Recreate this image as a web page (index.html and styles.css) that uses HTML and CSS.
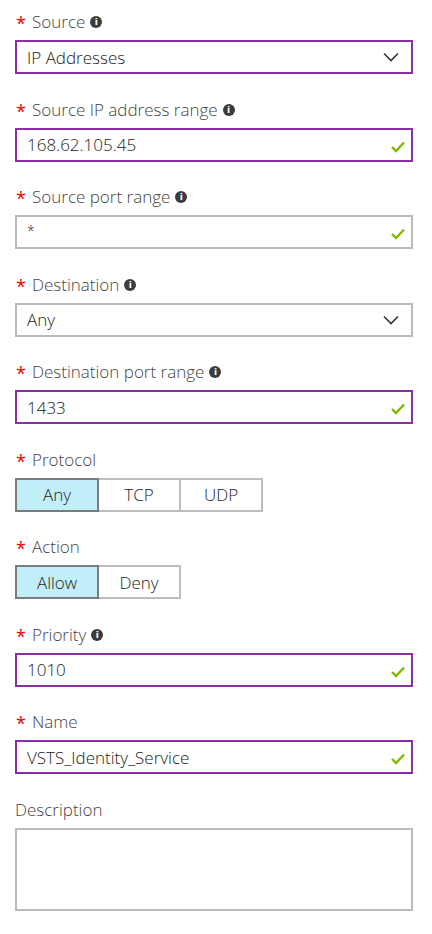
FILE: index.html
```html
<!DOCTYPE html>
<html>
<head>
<meta charset="utf-8">
<link rel="stylesheet" href="styles.css">
</head>
<body>
<form class="form">
  <div class="field">
    <div class="label"><span class="req">*</span><span class="text">Source</span><span class="info">i</span></div>
    <div class="control focus select"><span class="value">IP Addresses</span>
      <svg class="chev" width="16" height="10" viewBox="0 0 16 10"><path d="M1 1.5 L8 8.5 L15 1.5" fill="none" stroke="#333" stroke-width="1.6"/></svg>
    </div>
  </div>
  <div class="field">
    <div class="label"><span class="req">*</span><span class="text">Source IP address range</span><span class="info">i</span></div>
    <div class="control focus"><span class="value">168.62.105.45</span>
      <svg class="check" width="14" height="12" viewBox="0 0 14 12"><path d="M1 6 L5 10 L13 1.5" fill="none" stroke="#7fba00" stroke-width="2.4"/></svg>
    </div>
  </div>
  <div class="field">
    <div class="label"><span class="req">*</span><span class="text">Source port range</span><span class="info">i</span></div>
    <div class="control"><span class="value small">*</span>
      <svg class="check" width="14" height="12" viewBox="0 0 14 12"><path d="M1 6 L5 10 L13 1.5" fill="none" stroke="#7fba00" stroke-width="2.4"/></svg>
    </div>
  </div>
  <div class="field">
    <div class="label"><span class="req">*</span><span class="text">Destination</span><span class="info">i</span></div>
    <div class="control select"><span class="value">Any</span>
      <svg class="chev" width="16" height="10" viewBox="0 0 16 10"><path d="M1 1.5 L8 8.5 L15 1.5" fill="none" stroke="#333" stroke-width="1.6"/></svg>
    </div>
  </div>
  <div class="field">
    <div class="label"><span class="req">*</span><span class="text">Destination port range</span><span class="info">i</span></div>
    <div class="control focus"><span class="value">1433</span>
      <svg class="check" width="14" height="12" viewBox="0 0 14 12"><path d="M1 6 L5 10 L13 1.5" fill="none" stroke="#7fba00" stroke-width="2.4"/></svg>
    </div>
  </div>
  <div class="field">
    <div class="label"><span class="req">*</span><span class="text">Protocol</span></div>
    <div class="seg">
      <span class="opt on">Any</span><span class="opt">TCP</span><span class="opt">UDP</span>
    </div>
  </div>
  <div class="field">
    <div class="label"><span class="req">*</span><span class="text">Action</span></div>
    <div class="seg">
      <span class="opt on">Allow</span><span class="opt">Deny</span>
    </div>
  </div>
  <div class="field">
    <div class="label"><span class="req">*</span><span class="text">Priority</span><span class="info">i</span></div>
    <div class="control focus"><span class="value">1010</span>
      <svg class="check" width="14" height="12" viewBox="0 0 14 12"><path d="M1 6 L5 10 L13 1.5" fill="none" stroke="#7fba00" stroke-width="2.4"/></svg>
    </div>
  </div>
  <div class="field">
    <div class="label"><span class="req">*</span><span class="text">Name</span></div>
    <div class="control focus"><span class="value">VSTS_Identity_Service</span>
      <svg class="check" width="14" height="12" viewBox="0 0 14 12"><path d="M1 6 L5 10 L13 1.5" fill="none" stroke="#7fba00" stroke-width="2.4"/></svg>
    </div>
  </div>
  <div class="field">
    <div class="label plain"><span class="text">Description</span></div>
    <div class="area"></div>
  </div>
</form>
</body>
</html>
```
FILE: styles.css
```css
html, body {
  margin: 0;
  padding: 0;
  background: #fff;
}
body {
  font-family: "Open Sans", "Noto Sans", sans-serif;
  color: #333;
}
.form {
  padding: 12px 19px 0 15px;
  display: flex;
  flex-direction: column;
  gap: 25.5px;
}
.field {
  display: flex;
  flex-direction: column;
  gap: 8px;
}
.label {
  height: 20px;
  display: flex;
  align-items: center;
  font-size: 17px;
  font-weight: 300;
  color: #444;
}
.req {
  color: #e00000;
  width: 17px;
  padding-left: 1px;
  box-sizing: border-box;
  font-size: 18px;
  font-weight: 400;
  line-height: 20px;
  height: 20px;
  position: relative;
  top: 1px;
}
.text {
  line-height: 20px;
}
.info {
  display: inline-flex;
  align-items: center;
  justify-content: center;
  width: 12px;
  height: 12px;
  margin-left: 5px;
  border-radius: 50%;
  background: #3c3c3c;
  color: #fff;
  font-family: "DejaVu Sans", sans-serif;
  font-weight: 700;
  font-size: 9px;
  line-height: 12px;
}
.control {
  height: 34px;
  box-sizing: border-box;
  border: 2px solid #bbbbbb;
  display: flex;
  align-items: center;
  justify-content: space-between;
  padding: 0 6px 0 10px;
  font-size: 17px;
  font-weight: 300;
  color: #222;
}
.control.focus {
  border-color: #8a2ea6;
}
.control.select {
  padding-right: 12px;
}
.value.small {
  font-size: 14px;
  position: relative;
  top: -2px;
}
.check {
  margin-top: 4px;
}
.seg {
  display: flex;
}
.opt {
  width: 84px;
  height: 34px;
  box-sizing: border-box;
  border: 2px solid #bdbdbd;
  display: flex;
  align-items: center;
  justify-content: center;
  font-size: 17px;
  font-weight: 300;
  color: #222;
  margin-left: -2px;
  background: #fff;
}
.opt:first-child {
  margin-left: 0;
}
.opt.on {
  background: #c2eefa;
  border-color: #7b7b7b;
  position: relative;
  z-index: 1;
}
.area {
  height: 83px;
  box-sizing: border-box;
  border: 2px solid #bbbbbb;
}
```
